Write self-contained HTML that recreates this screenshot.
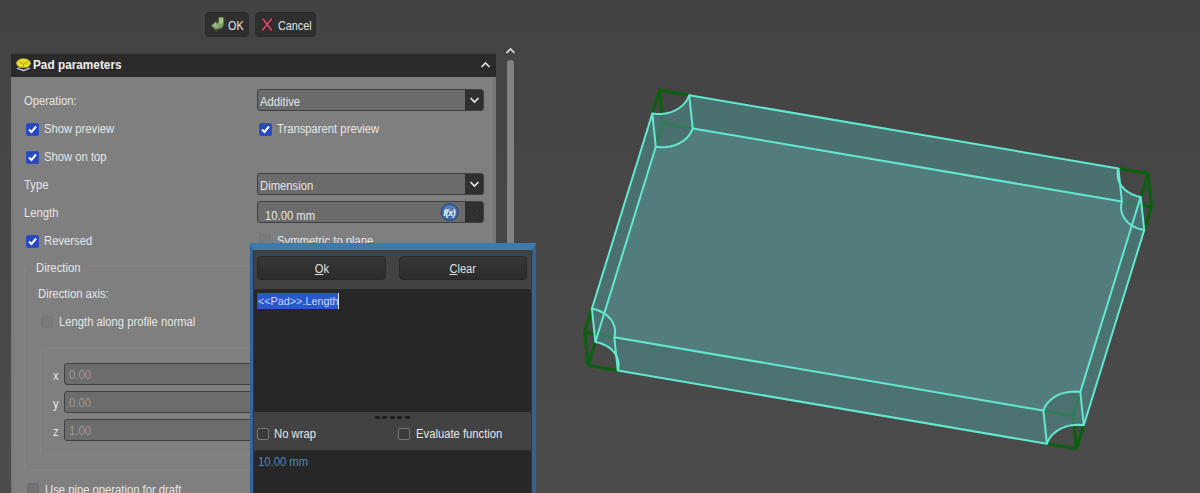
<!DOCTYPE html>
<html><head><meta charset="utf-8">
<style>
*{box-sizing:border-box;margin:0;padding:0}
html,body{width:1200px;height:493px;overflow:hidden;background:linear-gradient(#434343,#4b4b4b);font-family:"Liberation Sans",sans-serif;font-size:12.3px;color:#e6e6e6}
.a{position:absolute}
.t{position:absolute;white-space:nowrap;line-height:14px;transform:scaleX(0.915);transform-origin:0 0}
.btn{position:absolute;background:#2f2f2f;border:1px solid #2a2a2a;border-radius:4px}
.hdr{position:absolute;left:11px;top:54px;width:485px;height:23px;background:#2a2a2a}
.body{position:absolute;left:11px;top:77px;width:485px;height:430px;background:#7f7f7f;border-left:2px solid #7a7a7a}
.cb{position:absolute;width:13px;height:13px;margin-top:1px;border-radius:2px;background:#2848c0;border:1px solid #3050b8}
.cb svg{left:0!important;top:0!important}
.cb svg{position:absolute;left:1px;top:1px}
.combo{position:absolute;left:257px;width:227px;height:22px;background:#6b6b6b;border:1px solid #3e3e3e;border-radius:3px;overflow:hidden}
.combo .dd{position:absolute;right:0;top:0;width:18px;height:100%;background:#303030}
.inp{position:absolute;left:64px;width:200px;height:22px;background:#6c6c6c;border:1.5px solid #404040;border-radius:3px;color:#9a9a9a}
.dcb{position:absolute;width:12px;height:12px;border-radius:2px;background:#7a7a7a;border:1px solid #757575}
.dlg{position:absolute;left:250px;top:243px;width:286px;height:260px;background:#424242;border-top:7px solid #3e7bac;border-left:3px solid #34649a;border-right:4px solid #3a6288;box-shadow:inset 1px 0 0 #333,inset -1px 0 0 #333}
.dbtn{position:absolute;top:256px;height:24px;background:linear-gradient(#363636,#2b2b2b);border-radius:4px;border:1px solid #282828;color:#e0e0e0;text-align:center;line-height:24px}
.u{text-decoration:underline}
</style></head><body>
<!-- top buttons -->
<div class="btn" style="left:205px;top:12px;width:44px;height:25px"></div>
<div class="btn" style="left:255px;top:12px;width:61px;height:25px"></div>
<svg class="a" style="left:206px;top:13px" width="24" height="22" viewBox="0 0 24 22">
 <path d="M12.5 4.2 Q15 3.6 17.8 4.2 Q18.4 9 17.6 12.5 Q16.5 16 12 16.2 L10.6 16.4 L10.8 18.2 L5 12.6 L10.4 7.8 L10.6 10 L11.8 9.9 Q12.6 8 12.5 4.2 Z" fill="#7e9d6a" stroke="#3a5226" stroke-width="0.7"/>
 <path d="M13.3 5 Q15.2 4.6 17 5 Q17.2 8 16.6 10.5 L13 10.8 Q13.5 8 13.3 5 Z" fill="#b2c8a0" opacity="0.8"/>
 <path d="M6.5 12.6 L10 9.5 L10.2 12 L12 12 L12 14 L10 14.4 Z" fill="#a8c094" opacity="0.7"/>
</svg>
<div class="t" style="left:228px;top:18.5px;font-size:12.6px;transform:scaleX(0.86);color:#e2e2e2">OK</div>
<svg class="a" style="left:256px;top:13px" width="24" height="22" viewBox="0 0 24 22">
 <path d="M7.2 6.3 L15.2 16.8 M15.3 6.3 L6.8 16.8" stroke="#4a1a22" stroke-width="3" stroke-linecap="round"/>
 <path d="M7.2 6.3 L15.2 16.8 M15.3 6.3 L6.8 16.8" stroke="#c85068" stroke-width="1.8" stroke-linecap="round"/>
</svg>
<div class="t" style="left:278px;top:18.5px;font-size:12.6px;transform:scaleX(0.86);color:#e2e2e2">Cancel</div>

<!-- panel -->
<div class="hdr"></div>
<svg class="a" style="left:15px;top:56px" width="17" height="17" viewBox="0 0 17 17">
 <path d="M1 12.5 L8.5 9.5 L16 12.5 L8.5 15.5 Z" fill="#bdb6d0"/>
 <path d="M3.5 12 L8.5 13.6 L13.5 12 L8.5 10.5 Z" fill="#2e2418"/>
 <ellipse cx="8.5" cy="7.2" rx="7.2" ry="4.6" fill="#e4dc28"/>
 <path d="M4 6 L8.5 8 L13 5.5 M8.5 8 L8.5 11" stroke="#b09c10" stroke-width="0.9" fill="none"/>
</svg>
<div class="t" style="left:33px;top:58px;font-weight:bold;font-size:12.3px;color:#f0f0f0;transform:scaleX(0.96)">Pad parameters</div>
<svg class="a" style="left:480px;top:61px" width="11" height="8" viewBox="0 0 11 8"><path d="M1.5 6 L5.5 2 L9.5 6" stroke="#e0e0e0" stroke-width="1.7" fill="none"/></svg>
<div class="body"></div>
<div class="a" style="left:493px;top:77px;width:3px;height:430px;background:#767676"></div>

<!-- scrollbar -->
<svg class="a" style="left:505px;top:47px" width="11" height="8" viewBox="0 0 11 8"><path d="M1.5 6 L5.5 2 L9.5 6" stroke="#e0e0e0" stroke-width="1.7" fill="none"/></svg>
<div class="a" style="left:507px;top:60px;width:7px;height:440px;background:#828282;border-radius:3.5px"></div>

<div class="t" style="left:24px;top:94px">Operation:</div>
<div class="combo" style="top:89px"><div class="dd"></div><div class="t" style="left:2px;top:4.5px">Additive</div></div>
<svg class="a" style="left:469px;top:96px" width="11" height="8" viewBox="0 0 11 8"><path d="M1.5 2 L5.5 6 L9.5 2" stroke="#e8e8e8" stroke-width="1.7" fill="none"/></svg>

<div class="cb" style="left:26px;top:122px"><svg width="11" height="11" viewBox="0 0 11 11"><path d="M2 5.5 L4.5 8 L9 2.5" stroke="#fff" stroke-width="2" fill="none"/></svg></div>
<div class="t" style="left:44px;top:122px">Show preview</div>
<div class="cb" style="left:259px;top:122px"><svg width="11" height="11" viewBox="0 0 11 11"><path d="M2 5.5 L4.5 8 L9 2.5" stroke="#fff" stroke-width="2" fill="none"/></svg></div>
<div class="t" style="left:277px;top:122px">Transparent preview</div>
<div class="cb" style="left:26px;top:150px"><svg width="11" height="11" viewBox="0 0 11 11"><path d="M2 5.5 L4.5 8 L9 2.5" stroke="#fff" stroke-width="2" fill="none"/></svg></div>
<div class="t" style="left:44px;top:150px">Show on top</div>

<div class="t" style="left:24px;top:178px">Type</div>
<div class="combo" style="top:173px"><div class="dd"></div><div class="t" style="left:2px;top:4.5px">Dimension</div></div>
<svg class="a" style="left:469px;top:180px" width="11" height="8" viewBox="0 0 11 8"><path d="M1.5 2 L5.5 6 L9.5 2" stroke="#e8e8e8" stroke-width="1.7" fill="none"/></svg>

<div class="t" style="left:24px;top:206px">Length</div>
<div class="combo" style="top:201px"><div class="dd" style="background:#2f2f2f"></div><div class="t" style="left:7px;top:6.5px">10.00 mm</div></div>
<svg class="a" style="left:440px;top:202px" width="20" height="20" viewBox="0 0 20 20">
 <circle cx="9.7" cy="10.3" r="8.6" fill="#3a68a6" stroke="#2a4a7a" stroke-width="1"/>
 <ellipse cx="9.7" cy="7.5" rx="6" ry="4" fill="#6a98d0" opacity="0.45"/>
 <text x="3.2" y="14" font-family="Liberation Sans" font-style="italic" font-weight="bold" font-size="9.5" letter-spacing="-0.8" fill="#f4f4f4">f(x)</text>
</svg>
<svg class="a" style="left:469px;top:205px" width="11" height="16" viewBox="0 0 11 16"><path d="M2 6 L5.5 3 L9 6 M2 10 L5.5 13 L9 10" stroke="#363636" stroke-width="1.5" fill="none"/></svg>

<div class="cb" style="left:26px;top:234px"><svg width="11" height="11" viewBox="0 0 11 11"><path d="M2 5.5 L4.5 8 L9 2.5" stroke="#fff" stroke-width="2" fill="none"/></svg></div>
<div class="t" style="left:44px;top:234px">Reversed</div>
<div class="dcb" style="left:259px;top:234px"></div>
<div class="t" style="left:277px;top:234px">Symmetric to plane</div>

<!-- group box -->
<div class="a" style="left:24px;top:265px;width:480px;height:206px;border:1px solid #858585;border-radius:3px"></div>
<div class="a" style="left:32px;top:262px;width:56px;height:8px;background:#7f7f7f"></div>
<div class="t" style="left:36px;top:261px">Direction</div>
<div class="t" style="left:38px;top:287px">Direction axis:</div>
<div class="dcb" style="left:41px;top:316px"></div>
<div class="t" style="left:59px;top:315px">Length along profile normal</div>
<div class="a" style="left:40px;top:348px;width:470px;height:108px;border:1px solid #858585;border-radius:2px"></div>
<div class="t" style="left:53px;top:369px">x</div>
<div class="inp" style="top:363px"><div class="t" style="left:4px;top:4px">0.00</div></div>
<div class="t" style="left:53px;top:397px">y</div>
<div class="inp" style="top:391px"><div class="t" style="left:4px;top:4px">0.00</div></div>
<div class="t" style="left:53px;top:425px">z</div>
<div class="inp" style="top:419px"><div class="t" style="left:4px;top:4px">1.00</div></div>
<div class="dcb" style="left:27px;top:483px;background:#717171;border-color:#6c6c6c"></div>
<div class="t" style="left:45px;top:483px">Use pipe operation for draft</div>

<!-- expression dialog -->
<div class="dlg"></div>
<div class="dbtn" style="left:257px;width:129px"><span style="display:inline-block;transform:scaleX(0.9)"><span class="u">O</span>k</span></div>
<div class="dbtn" style="left:399px;width:128px"><span style="display:inline-block;transform:scaleX(0.9)"><span class="u">C</span>lear</span></div>
<div class="a" style="left:254px;top:289px;width:277px;height:123px;background:#272727;border-radius:2px"></div>
<div class="a" style="left:257px;top:293px;width:82px;height:16px;background:#2a57cb"></div>
<div class="t" style="left:258px;top:294px;color:#c8d6ff;font-size:11.8px">&lt;&lt;Pad&gt;&gt;.Length</div>
<div class="a" style="left:338px;top:293px;width:1px;height:16px;background:#e0e0e0"></div>
<div class="a" style="left:374.5px;top:416px;width:5px;height:2.5px;background:#1f1f1f;border-radius:1px"></div><div class="a" style="left:382.0px;top:416px;width:5px;height:2.5px;background:#1f1f1f;border-radius:1px"></div><div class="a" style="left:389.5px;top:416px;width:5px;height:2.5px;background:#1f1f1f;border-radius:1px"></div><div class="a" style="left:397.0px;top:416px;width:5px;height:2.5px;background:#1f1f1f;border-radius:1px"></div><div class="a" style="left:404.5px;top:416px;width:5px;height:2.5px;background:#1f1f1f;border-radius:1px"></div>
<div class="dcb" style="left:257px;top:428px;background:#3a3a3a;border-color:#777"></div>
<div class="t" style="left:274px;top:427px">No wrap</div>
<div class="dcb" style="left:398px;top:428px;background:#3a3a3a;border-color:#777"></div>
<div class="t" style="left:416px;top:427px">Evaluate function</div>
<div class="a" style="left:254px;top:450px;width:277px;height:60px;background:#272727;border-radius:3px"></div>
<div class="t" style="left:258px;top:455px;color:#4f8ab0">10.00 mm</div>

<svg width="1200" height="493" style="position:absolute;left:0;top:0">
<defs><clipPath id="cl"><path d="M655.8,146.8 L660.6,147.3 L665.3,147.2 L670.1,146.5 L674.6,145.3 L678.9,143.5 L682.8,141.2 L686.2,138.5 L689.0,135.4 L691.2,132.0 L692.7,128.4 L1121.9,201.6 L1121.1,205.3 L1121.1,209.1 L1121.8,212.8 L1123.3,216.4 L1125.4,219.7 L1128.2,222.7 L1131.6,225.3 L1135.4,227.4 L1139.7,229.1 L1144.2,230.1 L1083.8,425.3 L1079.1,424.8 L1074.3,424.9 L1069.6,425.6 L1065.0,426.8 L1060.8,428.6 L1056.9,430.9 L1053.5,433.6 L1050.6,436.7 L1048.4,440.1 L1046.9,443.8 L617.8,370.5 L618.5,366.8 L618.6,363.0 L617.8,359.3 L616.4,355.7 L614.2,352.4 L611.4,349.4 L608.1,346.8 L604.2,344.7 L600.0,343.0 L595.4,342.0Z"/></clipPath></defs>
<path d="M689.2,95.2 L659.6,90.1 L652.3,113.6M1118.4,168.4 L1148.0,173.5 L1140.7,196.9M1043.4,410.6 L1073.0,415.6 L1080.3,392.1M614.3,337.3 L584.6,332.2 L591.9,308.8M692.7,128.4 L663.1,123.3 L655.8,146.8M659.6,90.1 L663.1,123.3M1121.9,201.6 L1151.5,206.7 L1144.2,230.1M1148.0,173.5 L1151.5,206.7M1046.9,443.8 L1076.5,448.8 L1083.8,425.3M1073.0,415.6 L1076.5,448.8M617.8,370.5 L588.1,365.4 L595.4,342.0M584.6,332.2 L588.1,365.4" fill="none" stroke="#0b600f" stroke-width="3" stroke-linejoin="round"/>
<g fill="#4d8786" stroke="none" opacity="0.65">
<path d="M652.3,113.6 L657.1,114.1 L661.8,114.0 L666.6,113.3 L671.1,112.1 L675.4,110.3 L679.3,108.0 L682.7,105.3 L685.5,102.2 L687.7,98.8 L689.2,95.2 L1118.4,168.4 L1117.6,172.1 L1117.6,175.9 L1118.3,179.6 L1119.8,183.2 L1121.9,186.5 L1124.7,189.5 L1128.1,192.1 L1131.9,194.2 L1136.2,195.9 L1140.7,196.9 L1080.3,392.1 L1075.6,391.6 L1070.8,391.7 L1066.1,392.4 L1061.5,393.6 L1057.3,395.4 L1053.4,397.7 L1050.0,400.4 L1047.1,403.5 L1044.9,406.9 L1043.4,410.6 L614.3,337.3 L615.0,333.6 L615.1,329.8 L614.3,326.1 L612.9,322.5 L610.7,319.2 L607.9,316.2 L604.6,313.6 L600.7,311.5 L596.5,309.8 L591.9,308.8ZM655.8,146.8 L660.6,147.3 L665.3,147.2 L670.1,146.5 L674.6,145.3 L678.9,143.5 L682.8,141.2 L686.2,138.5 L689.0,135.4 L691.2,132.0 L692.7,128.4 L1121.9,201.6 L1121.1,205.3 L1121.1,209.1 L1121.8,212.8 L1123.3,216.4 L1125.4,219.7 L1128.2,222.7 L1131.6,225.3 L1135.4,227.4 L1139.7,229.1 L1144.2,230.1 L1083.8,425.3 L1079.1,424.8 L1074.3,424.9 L1069.6,425.6 L1065.0,426.8 L1060.8,428.6 L1056.9,430.9 L1053.5,433.6 L1050.6,436.7 L1048.4,440.1 L1046.9,443.8 L617.8,370.5 L618.5,366.8 L618.6,363.0 L617.8,359.3 L616.4,355.7 L614.2,352.4 L611.4,349.4 L608.1,346.8 L604.2,344.7 L600.0,343.0 L595.4,342.0ZM652.3,113.6 L657.1,114.1 L660.6,147.3 L655.8,146.8ZM657.1,114.1 L661.8,114.0 L665.3,147.2 L660.6,147.3ZM661.8,114.0 L666.6,113.3 L670.1,146.5 L665.3,147.2ZM666.6,113.3 L671.1,112.1 L674.6,145.3 L670.1,146.5ZM671.1,112.1 L675.4,110.3 L678.9,143.5 L674.6,145.3ZM675.4,110.3 L679.3,108.0 L682.8,141.2 L678.9,143.5ZM679.3,108.0 L682.7,105.3 L686.2,138.5 L682.8,141.2ZM682.7,105.3 L685.5,102.2 L689.0,135.4 L686.2,138.5ZM685.5,102.2 L687.7,98.8 L691.2,132.0 L689.0,135.4ZM687.7,98.8 L689.2,95.2 L692.7,128.4 L691.2,132.0ZM689.2,95.2 L1118.4,168.4 L1121.9,201.6 L692.7,128.4ZM1121.9,201.6 L1121.1,205.3 L1117.6,172.1 L1118.4,168.4ZM1121.1,205.3 L1121.1,209.1 L1117.6,175.9 L1117.6,172.1ZM1117.6,175.9 L1118.3,179.6 L1121.8,212.8 L1121.1,209.1ZM1118.3,179.6 L1119.8,183.2 L1123.3,216.4 L1121.8,212.8ZM1119.8,183.2 L1121.9,186.5 L1125.4,219.7 L1123.3,216.4ZM1121.9,186.5 L1124.7,189.5 L1128.2,222.7 L1125.4,219.7ZM1124.7,189.5 L1128.1,192.1 L1131.6,225.3 L1128.2,222.7ZM1128.1,192.1 L1131.9,194.2 L1135.4,227.4 L1131.6,225.3ZM1131.9,194.2 L1136.2,195.9 L1139.7,229.1 L1135.4,227.4ZM1136.2,195.9 L1140.7,196.9 L1144.2,230.1 L1139.7,229.1ZM1144.2,230.1 L1083.8,425.3 L1080.3,392.1 L1140.7,196.9ZM1083.8,425.3 L1079.1,424.8 L1075.6,391.6 L1080.3,392.1ZM1079.1,424.8 L1074.3,424.9 L1070.8,391.7 L1075.6,391.6ZM1074.3,424.9 L1069.6,425.6 L1066.1,392.4 L1070.8,391.7ZM1069.6,425.6 L1065.0,426.8 L1061.5,393.6 L1066.1,392.4ZM1065.0,426.8 L1060.8,428.6 L1057.3,395.4 L1061.5,393.6ZM1060.8,428.6 L1056.9,430.9 L1053.4,397.7 L1057.3,395.4ZM1056.9,430.9 L1053.5,433.6 L1050.0,400.4 L1053.4,397.7ZM1053.5,433.6 L1050.6,436.7 L1047.1,403.5 L1050.0,400.4ZM1050.6,436.7 L1048.4,440.1 L1044.9,406.9 L1047.1,403.5ZM1048.4,440.1 L1046.9,443.8 L1043.4,410.6 L1044.9,406.9ZM1046.9,443.8 L617.8,370.5 L614.3,337.3 L1043.4,410.6ZM614.3,337.3 L615.0,333.6 L618.5,366.8 L617.8,370.5ZM615.0,333.6 L615.1,329.8 L618.6,363.0 L618.5,366.8ZM618.6,363.0 L617.8,359.3 L614.3,326.1 L615.1,329.8ZM617.8,359.3 L616.4,355.7 L612.9,322.5 L614.3,326.1ZM616.4,355.7 L614.2,352.4 L610.7,319.2 L612.9,322.5ZM614.2,352.4 L611.4,349.4 L607.9,316.2 L610.7,319.2ZM611.4,349.4 L608.1,346.8 L604.6,313.6 L607.9,316.2ZM608.1,346.8 L604.2,344.7 L600.7,311.5 L604.6,313.6ZM604.2,344.7 L600.0,343.0 L596.5,309.8 L600.7,311.5ZM600.0,343.0 L595.4,342.0 L591.9,308.8 L596.5,309.8ZM591.9,308.8 L652.3,113.6 L655.8,146.8 L595.4,342.0Z" fill-rule="nonzero"/>
</g>
<path d="M652.3,113.6 L657.1,114.1 L661.8,114.0 L666.6,113.3 L671.1,112.1 L675.4,110.3 L679.3,108.0 L682.7,105.3 L685.5,102.2 L687.7,98.8 L689.2,95.2 L1118.4,168.4 L1117.6,172.1 L1117.6,175.9 L1118.3,179.6 L1119.8,183.2 L1121.9,186.5 L1124.7,189.5 L1128.1,192.1 L1131.9,194.2 L1136.2,195.9 L1140.7,196.9 L1080.3,392.1 L1075.6,391.6 L1070.8,391.7 L1066.1,392.4 L1061.5,393.6 L1057.3,395.4 L1053.4,397.7 L1050.0,400.4 L1047.1,403.5 L1044.9,406.9 L1043.4,410.6 L614.3,337.3 L615.0,333.6 L615.1,329.8 L614.3,326.1 L612.9,322.5 L610.7,319.2 L607.9,316.2 L604.6,313.6 L600.7,311.5 L596.5,309.8 L591.9,308.8Z" fill="#5b8a89" opacity="0.5" clip-path="url(#cl)"/>
<g fill="none" stroke="#62e8cf" stroke-width="2" stroke-linejoin="round">
<path d="M652.3,113.6 L657.1,114.1 L661.8,114.0 L666.6,113.3 L671.1,112.1 L675.4,110.3 L679.3,108.0 L682.7,105.3 L685.5,102.2 L687.7,98.8 L689.2,95.2 L1118.4,168.4 L1117.6,172.1 L1117.6,175.9 L1118.3,179.6 L1119.8,183.2 L1121.9,186.5 L1124.7,189.5 L1128.1,192.1 L1131.9,194.2 L1136.2,195.9 L1140.7,196.9 L1080.3,392.1 L1075.6,391.6 L1070.8,391.7 L1066.1,392.4 L1061.5,393.6 L1057.3,395.4 L1053.4,397.7 L1050.0,400.4 L1047.1,403.5 L1044.9,406.9 L1043.4,410.6 L614.3,337.3 L615.0,333.6 L615.1,329.8 L614.3,326.1 L612.9,322.5 L610.7,319.2 L607.9,316.2 L604.6,313.6 L600.7,311.5 L596.5,309.8 L591.9,308.8Z"/><path d="M655.8,146.8 L660.6,147.3 L665.3,147.2 L670.1,146.5 L674.6,145.3 L678.9,143.5 L682.8,141.2 L686.2,138.5 L689.0,135.4 L691.2,132.0 L692.7,128.4 L1121.9,201.6 L1121.1,205.3 L1121.1,209.1 L1121.8,212.8 L1123.3,216.4 L1125.4,219.7 L1128.2,222.7 L1131.6,225.3 L1135.4,227.4 L1139.7,229.1 L1144.2,230.1 L1083.8,425.3 L1079.1,424.8 L1074.3,424.9 L1069.6,425.6 L1065.0,426.8 L1060.8,428.6 L1056.9,430.9 L1053.5,433.6 L1050.6,436.7 L1048.4,440.1 L1046.9,443.8 L617.8,370.5 L618.5,366.8 L618.6,363.0 L617.8,359.3 L616.4,355.7 L614.2,352.4 L611.4,349.4 L608.1,346.8 L604.2,344.7 L600.0,343.0 L595.4,342.0Z"/><path d="M689.2,95.2 L692.7,128.4M652.3,113.6 L655.8,146.8M1118.4,168.4 L1121.9,201.6M1140.7,196.9 L1144.2,230.1M1080.3,392.1 L1083.8,425.3M1043.4,410.6 L1046.9,443.8M614.3,337.3 L617.8,370.5M591.9,308.8 L595.4,342.0"/>
</g>
</svg>
</body></html>
